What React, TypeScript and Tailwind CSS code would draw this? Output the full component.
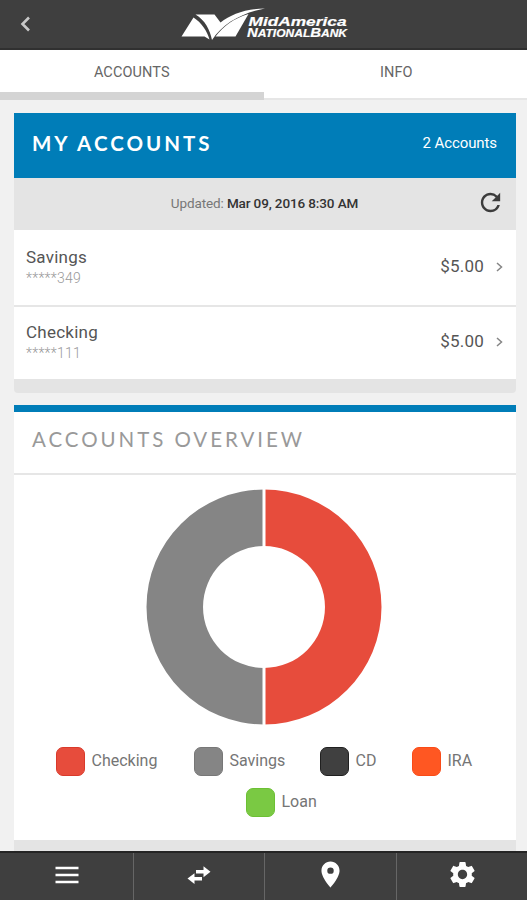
import React from 'react'
import { MdPlace, MdRefresh, MdSettings } from 'react-icons/md'

interface Account {
  name: string
  mask: string
  balance: string
}

const accounts: Account[] = [
  { name: 'Savings', mask: '*****349', balance: '$5.00' },
  { name: 'Checking', mask: '*****111', balance: '$5.00' },
]

function BankLogo() {
  return (
    <svg width="170" height="36" viewBox="0 0 170 36" className="block" aria-label="MidAmerica National Bank">
      <path d="M12.500 11.500 L0.500 30.500 H23.500 L28.500 33.500 C26 25 21 17 12.500 11.500 Z" fill="#fff" />
      <path d="M14.500 8.500 H33.500 L39.500 16.500 C50 8.500 64 3 84 2.500 C62 6.500 42 17 31 34 C29 24 24 14 14.500 8.500 Z" fill="#fff" />
      <path d="M34.500 30.500 C42.500 20 52.500 12.500 67.500 8 L54.500 30.500 Z" fill="#fff" />
      <g fill="#fff" stroke="#fff" strokeWidth="0.200" fontFamily="'Liberation Sans', sans-serif" fontWeight="700" fontStyle="italic">
        <text x="67.500" y="20" fontSize="13.500" textLength="98" lengthAdjust="spacingAndGlyphs">MidAmerica</text>
        <text x="66" y="31" fontSize="13" textLength="100" lengthAdjust="spacingAndGlyphs">
          N<tspan fontSize="10.500">ATIONAL</tspan>B<tspan fontSize="10.500">ANK</tspan>
        </text>
      </g>
    </svg>
  )
}

function MenuIcon() {
  return (
    <svg width="24" height="18" viewBox="0 0 24 18" stroke="#fff" strokeWidth="2.700">
      <path d="M0.500 2 H23.500 M0.500 9 H23.500 M0.500 16 H23.500" />
    </svg>
  )
}

function TransferIcon() {
  return (
    <svg width="24" height="18" viewBox="0 0 24 18" fill="#fff">
      <path d="M9 4 H16.500 V0.300 L23.500 5.800 L16.500 11.200 V7.600 H9 Z" />
      <path d="M15 14.500 H7.500 V18 L0.500 12.600 L7.500 7.200 V10.900 H15 Z" />
    </svg>
  )
}

function AccountRow({ account }: { account: Account }) {
  return (
    <div className="flex h-full items-center justify-between bg-white pr-[13px] pb-[2px] pl-[12px]">
      <div className="pt-[1px]">
        <div className="text-[17px] leading-[22px] tracking-[0.25px] text-[#555]">{account.name}</div>
        <div className="text-[14px] leading-[21px] font-light tracking-[0.25px] text-[#999]">{account.mask}</div>
      </div>
      <div className="flex items-center">
        <span className="text-[17px] tracking-[0.2px] text-[#555]">{account.balance}</span>
        <svg width="7" height="10" viewBox="0 0 7 10" className="ml-[12px]" fill="none" stroke="#858585" strokeWidth="1.500">
          <path d="M1 1 L5.500 5 L1 9" />
        </svg>
      </div>
    </div>
  )
}

function LegendItem({ label, swatch }: { label: string; swatch: string }) {
  return (
    <div className="flex items-center">
      <span className={`h-[29px] w-[29px] rounded-[7px] border ${swatch}`} />
      <span className="ml-[6.5px] pb-[2px] text-[16px] leading-[20px] text-[#757575]">{label}</span>
    </div>
  )
}

export default function App() {
  return (
    <div className="flex h-[900px] w-[527px] flex-col overflow-hidden bg-[#f1f1f1] font-['Roboto',sans-serif]">
      {/* Header */}
      <header className="grid h-[50px] shrink-0 grid-cols-[181px_1fr] border-b-2 border-[#303030] bg-[#3f3f3f]">
        <button className="flex items-center pl-[20px]" aria-label="Back">
          <svg width="11" height="16" viewBox="0 0 11 16" fill="none" stroke="#c9c9c9" strokeWidth="2.600">
            <path d="M9 1.500 L2.500 8 L9 14.500" />
          </svg>
        </button>
        <div className="pt-[6px]">
          <BankLogo />
        </div>
      </header>

      {/* Tabs */}
      <nav className="grid h-[50px] shrink-0 grid-cols-2 grid-rows-[50px] bg-white text-center text-[14.5px] leading-[46px] text-[#666]">
        <div className="h-[50px] border-b-8 border-[#d4d4d4] tracking-[0.1px]">ACCOUNTS</div>
        <div className="h-[50px] border-b-2 border-[#e6e6e6] pl-[2px]">INFO</div>
      </nav>

      <main className="flex min-h-0 flex-1 flex-col pt-[13px] pr-[11px] pl-[14px]">
        {/* Accounts */}
        <section className="shrink-0 overflow-hidden rounded-b-[4px]">
          <div className="flex h-[65px] items-center justify-between bg-[#007db8] pr-[19px] pb-[4px] pl-[18px] text-white">
            <h1 className="font-['Lato',sans-serif] text-[20.5px] font-bold tracking-[3px]">MY ACCOUNTS</h1>
            <span className="text-[15px] tracking-[-0.1px]">2 Accounts</span>
          </div>
          <div className="grid h-[52px] grid-cols-[1fr_26px] items-center bg-[#e4e4e4] pr-[13px] pb-[2px]">
            <div className="pl-[38px] text-center text-[13.5px] tracking-[-0.12px] text-[#333]">
              <span className="text-[#777]">Updated:</span> <b className="font-medium">Mar 09, 2016 8:30 AM</b>
            </div>
            <MdRefresh size={29} className="-ml-[1px] -mt-[2px] text-[#3c3c3c]" />
          </div>
          <div className="h-[75px]">
            <AccountRow account={accounts[0]} />
          </div>
          <div className="h-[74px] border-t-2 border-[#e6e6e6]">
            <AccountRow account={accounts[1]} />
          </div>
          <div className="h-[14px] bg-[#e4e4e4]" />
        </section>

        {/* Overview */}
        <section className="mt-[12px] flex min-h-0 flex-1 flex-col border-t-[7px] border-[#007db8] bg-white">
          <h2 className="h-[63px] shrink-0 border-b-2 border-[#e6e6e6] pl-[18px] font-['Lato',sans-serif] text-[20.5px] leading-[55px] tracking-[2.95px] text-[#999]">
            ACCOUNTS OVERVIEW
          </h2>
          <div className="flex h-[365px] shrink-0 flex-col items-center pt-[14px]">
            <svg width="236" height="236" viewBox="0 0 236 236" className="mr-[2px]">
              <path d="M118 0.500 A117.500 117.500 0 0 1 118 235.500 V179 A61 61 0 0 0 118 57 Z" fill="#e74c3c" />
              <path d="M118 0.500 A117.500 117.500 0 0 0 118 235.500 V179 A61 61 0 0 1 118 57 Z" fill="#858585" />
              <path d="M118 0 V58 M118 178 V236" stroke="#fff" strokeWidth="3" />
            </svg>
            <div className="mt-[22px] grid w-full grid-cols-[138px_126px_92px_1fr] pl-[42px]">
              <LegendItem label="Checking" swatch="bg-[#e74c3c] border-[#d93a2b]" />
              <LegendItem label="Savings" swatch="bg-[#858585] border-[#777]" />
              <LegendItem label="CD" swatch="bg-[#404040] border-[#202020]" />
              <LegendItem label="IRA" swatch="bg-[#ff5722] border-[#f94b17]" />
            </div>
            <div className="mt-[12px] flex w-full pl-[232px]">
              <LegendItem label="Loan" swatch="bg-[#7ac943] border-[#6cc034]" />
            </div>
          </div>
          <div className="flex-1 bg-[#e4e4e4]" />
        </section>
      </main>

      {/* Bottom bar */}
      <footer className="grid h-[49px] shrink-0 grid-cols-[134px_131px_132px_1fr] border-t-2 border-[#242424] bg-[#3f3f3f] text-white">
        <div className="flex items-center justify-center border-r border-[#666] pb-[4px]">
          <MenuIcon />
        </div>
        <div className="flex items-center justify-center border-r border-[#666] pb-[4px]">
          <TransferIcon />
        </div>
        <div className="flex items-center justify-center border-r border-[#666] pb-[4px]">
          <MdPlace size={31} />
        </div>
        <div className="flex items-center justify-center pb-[4px]">
          <MdSettings size={31} />
        </div>
      </footer>
    </div>
  )
}
